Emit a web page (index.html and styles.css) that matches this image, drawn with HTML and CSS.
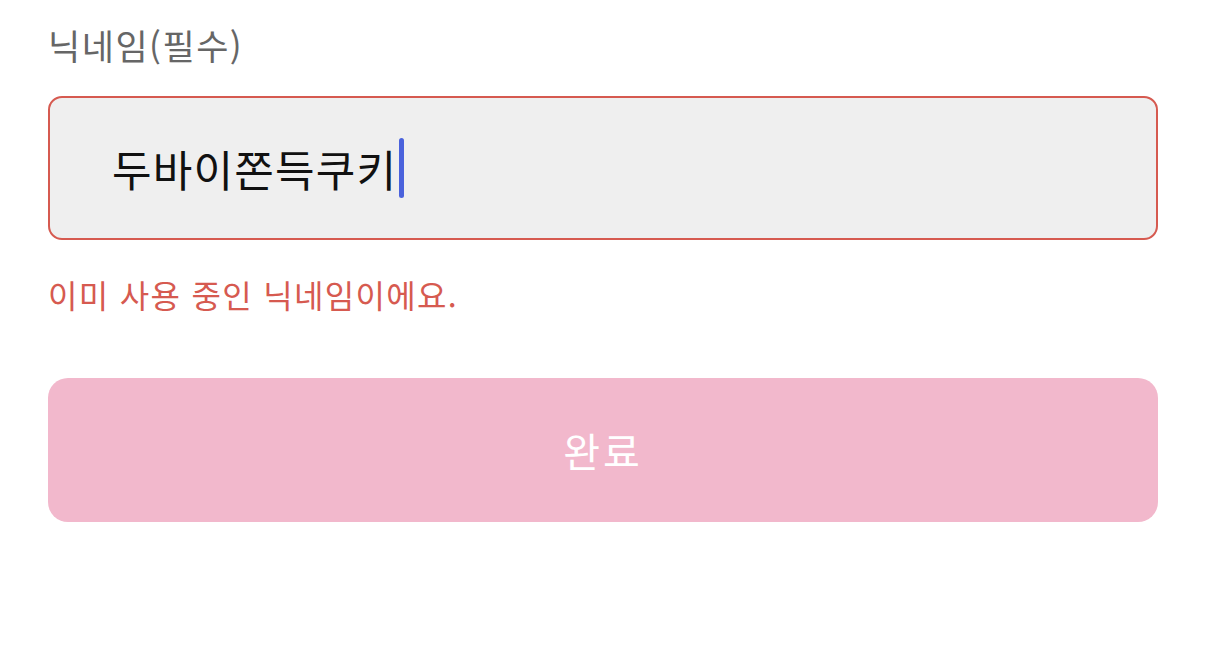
FILE: index.html
```html
<!DOCTYPE html>
<html lang="ko">
<head>
    <meta charset="UTF-8">
    <meta name="viewport" content="width=device-width, initial-scale=1.0">
    <title>닉네임 설정</title>
    <link rel="stylesheet" href="styles.css">
</head>
<body>
    <form class="nickname-form">
        <label class="field-label" for="nickname">닉네임(필수)</label>
        <div class="input-box error">
            <span class="input-value">두바이쫀득쿠키</span><span class="caret"></span>
        </div>
        <p class="error-msg">이미 사용 중인 닉네임이에요.</p>
        <button type="button" class="submit-btn">완료</button>
    </form>
</body>
</html>
```

FILE: styles.css
```css
body {
    margin: 0;
    background-color: #fff;
    font-family: "Noto Sans CJK KR", "Noto Sans", sans-serif;
}
.nickname-form {
    display: flex;
    flex-direction: column;
    padding: 22px 48px 0 48px;
}
.field-label {
    font-size: 35px;
    line-height: 46px;
    color: #666;
    letter-spacing: 1.5px;
}
.input-box {
    margin-top: 28px;
    height: 140px;
    display: flex;
    align-items: center;
    padding-left: 62px;
    background-color: #efefef;
    border: 2px solid #dcdcdc;
    border-radius: 14px;
}
.input-box.error {
    border-color: #d65a50;
}
.input-value {
    font-size: 43px;
    color: #111;
    letter-spacing: 1.2px;
}
.caret {
    width: 5px;
    height: 60px;
    margin-left: 2px;
    border-radius: 3px;
    background-color: #4a62dc;
}
.error-msg {
    margin: 34px 0 0 0;
    font-size: 32px;
    line-height: 40px;
    color: #d65a50;
    letter-spacing: 1.3px;
}
.submit-btn {
    margin-top: 64px;
    height: 144px;
    border: none;
    border-radius: 20px;
    background-color: #f2b8cc;
    color: #fff;
    font-family: inherit;
    font-size: 40px;
    font-weight: 400;
    letter-spacing: 3px;
}
```
